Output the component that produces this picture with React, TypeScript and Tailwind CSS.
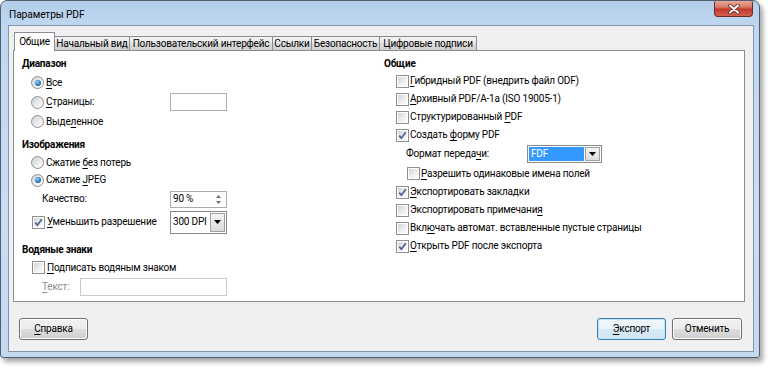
import React from "react";

const U = ({ children }: { children: React.ReactNode }) => (
  <span className="underline decoration-1 underline-offset-[2px]">{children}</span>
);

const Radio = ({ checked, className = "" }: { checked?: boolean; className?: string }) => (
  <span
    className={
      "w-[13px] h-[13px] shrink-0 rounded-full border border-[#8e8f8f] bg-[linear-gradient(135deg,#d0d0d0,#efefef_60%,#ffffff)] flex items-center justify-center " +
      className
    }
  >
    {checked && (
      <span className="w-[6px] h-[6px] rounded-full bg-[radial-gradient(circle_at_40%_35%,#9fd6ff_0%,#2f7fcc_50%,#173f77_100%)]" />
    )}
  </span>
);

const Check = ({ checked, className = "" }: { checked?: boolean; className?: string }) => (
  <span className={"w-[13px] h-[13px] shrink-0 border border-[#8e8f8f] bg-white p-[1px] flex " + className}>
    <span className="flex-1 bg-[linear-gradient(135deg,#d2d2d2,#eeeeee_55%,#fbfbfb)] flex items-center justify-center">
      {checked && (
        <svg viewBox="0 0 9 9" className="w-[9px] h-[9px]">
          <path d="M1.3 4.6 L3.4 7.2 L7.8 1.2" stroke="#4c619c" strokeWidth="1.7" fill="none" />
        </svg>
      )}
    </span>
  </span>
);

const Arrow = () => (
  <svg viewBox="0 0 7 4" className="w-[7px] h-[4px]">
    <path d="M0 0 H7 L3.5 4 Z" fill="#000" />
  </svg>
);

const Tab = ({ label, w, selected }: { label: string; w: number; selected?: boolean }) => (
  <div
    style={{ width: w }}
    className={
      selected
        ? "relative z-10 h-[19px] bg-white border border-b-0 border-[#898c95] flex items-center justify-center pb-[1px]"
        : "h-[14px] mb-[1px] -ml-[1px] bg-[linear-gradient(#f3f3f3,#ebebeb_50%,#dddddd_50%,#cfcfcf)] border border-b-0 border-[#898c95] flex items-center justify-center"
    }
  >
    {label}
  </div>
);

const Btn = ({ children, w, def }: { children: React.ReactNode; w: number; def?: boolean }) => (
  <div
    style={{ width: w }}
    className={
      def
        ? "h-[22px] rounded-[3px] border border-[#3c7fb1] bg-[linear-gradient(#f2f8fc,#e8f2fa_50%,#d9eaf6_50%,#cfe4f3)] shadow-[inset_0_0_0_1px_#bfe4fb] flex items-center justify-center"
        : "h-[22px] rounded-[3px] border border-[#707070] bg-[linear-gradient(#f2f2f2,#ebebeb_50%,#dddddd_50%,#cfcfcf)] shadow-[inset_0_0_0_1px_#fcfcfc] flex items-center justify-center"
    }
  >
    {children}
  </div>
);

export default function App() {
  return (
    <div className="w-[768px] h-[367px] bg-white font-['Roboto','Noto_Sans',sans-serif] text-[10px] tracking-[-0.2px] text-black leading-none whitespace-nowrap">
      <div className="w-[760px] h-[358px] rounded-t-[7px] rounded-b-[3px] border border-[#4f5d6d] bg-[linear-gradient(to_bottom,#b3cdea,#bfd7f1_24px,#c9ddf3_60%,#c4d9f0)] shadow-[3px_4px_5px_rgba(0,0,0,0.35)] flex flex-col">
        <div className="h-[24px] flex items-start justify-between">
          <div className="pl-[8px] pt-[9px] text-[10.2px] tracking-[-0.1px] text-black">Параметры PDF</div>
          <div className="mr-[6px] w-[39px] h-[16px] rounded-b-[4px] rounded-t-[2px] border border-t-0 border-[#6e2b23] bg-[linear-gradient(#e9a89a,#d97a68_40%,#c0392b_55%,#d0614f)] flex items-center justify-center">
            <svg viewBox="0 0 12 10" className="w-[12px] h-[10px]">
              <path d="M2 1.5 L10 8.5 M10 1.5 L2 8.5" stroke="#5a2a24" strokeWidth="3.6" strokeLinecap="round" />
              <path d="M2 1.5 L10 8.5 M10 1.5 L2 8.5" stroke="#ffffff" strokeWidth="2" strokeLinecap="round" />
            </svg>
          </div>
        </div>
        <div className="ml-[7px] mr-[5px] mb-[5px] flex-1 bg-[#f0f0f0] border border-[#8396ab] flex flex-col">
          <div className="pt-[6px] pl-[5px] flex items-end">
            <Tab label="Общие" w={41} selected />
            <Tab label="Начальный вид" w={76} />
            <Tab label="Пользовательский интерфейс" w={144} />
            <Tab label="Ссылки" w={40} />
            <Tab label="Безопасность" w={69} />
            <Tab label="Цифровые подписи" w={98} />
          </div>
          <div className="-mt-[1px] ml-[4px] w-[732px] h-[252px] bg-white border border-[#898c95] flex pl-[8px] pt-[4px]">
            {/* Left column */}
            <div className="w-[362px] flex flex-col">
              <div className="h-[18px] flex items-center font-bold">Диапазон</div>
              <div className="h-[19px] flex items-center">
                <Radio checked className="ml-[9px]" />
                <span className="ml-[2px]">
                  <U>В</U>се
                </span>
              </div>
              <div className="h-[20px] flex items-center">
                <div className="w-[148px] flex items-center">
                  <Radio className="ml-[9px]" />
                  <span className="ml-[2px]">
                    <U>С</U>траницы:
                  </span>
                </div>
                <div className="w-[57px] h-[18px] border border-[#abadb3] bg-white" />
              </div>
              <div className="h-[19px] flex items-center">
                <Radio className="ml-[9px]" />
                <span className="ml-[2px]">
                  Выде<U>л</U>енное
                </span>
              </div>
              <div className="mt-[5px] h-[18px] flex items-center font-bold">Изображения</div>
              <div className="h-[17px] flex items-center">
                <Radio className="ml-[9px]" />
                <span className="ml-[2px]">
                  Сжатие <U>б</U>ез потерь
                </span>
              </div>
              <div className="h-[18px] flex items-center">
                <Radio checked className="ml-[9px]" />
                <span className="ml-[2px]">
                  Сжатие <U>J</U>PEG
                </span>
              </div>
              <div className="h-[20px] flex items-center">
                <div className="w-[148px] pl-[20px]">Качество:</div>
                <div className="w-[57px] h-[17px] border border-[#abadb3] bg-white flex items-center">
                  <span className="flex-1 pl-[2px]">90 %</span>
                  <div className="w-[13px] h-full flex flex-col items-center justify-center gap-[3px] mr-[1px]">
                    <svg viewBox="0 0 5 3" className="w-[5px] h-[3px]">
                      <path d="M0 3 H5 L2.5 0 Z" fill="#6f6f6f" />
                    </svg>
                    <svg viewBox="0 0 5 3" className="w-[5px] h-[3px]">
                      <path d="M0 0 H5 L2.5 3 Z" fill="#6f6f6f" />
                    </svg>
                  </div>
                </div>
              </div>
              <div className="mt-[1px] h-[24px] flex items-center">
                <div className="w-[148px] flex items-center">
                  <Check checked className="ml-[10px]" />
                  <span className="ml-[2px]">
                    <U>У</U>меньшить разрешение
                  </span>
                </div>
                <div className="w-[57px] h-[23px] border border-[#8a8a8a] bg-white flex items-stretch">
                  <span className="flex-1 flex items-center pl-[2px]">300 DPI</span>
                  <div className="w-[15px] m-[1px] border border-[#a0a0a0] bg-[linear-gradient(#f4f4f4,#dcdcdc)] flex items-center justify-center">
                    <Arrow />
                  </div>
                </div>
              </div>
              <div className="mt-[7px] h-[18px] flex items-center font-bold">Водяные знаки</div>
              <div className="h-[17px] flex items-center">
                <Check className="ml-[10px]" />
                <span className="ml-[2px]">
                  <U>П</U>одписать водяным знаком
                </span>
              </div>
              <div className="mt-[1px] h-[20px] flex items-center">
                <div className="w-[58px] pl-[20px] text-[#8d8d8d]">
                  <U>Т</U>екст:
                </div>
                <div className="w-[147px] h-[18px] border border-[#c9cbd0] bg-white" />
              </div>
            </div>
            {/* Right column */}
            <div className="flex flex-col">
              <div className="h-[17px] flex items-center font-bold">Общие</div>
              <div className="h-[18px] flex items-center">
                <Check className="ml-[12px]" />
                <span className="ml-[1px]">
                  <U>Г</U>ибридный PDF (внедрить файл ODF)
                </span>
              </div>
              <div className="h-[18px] flex items-center">
                <Check className="ml-[12px]" />
                <span className="ml-[1px]">
                  <U>А</U>рхивный PDF/A-1a (ISO 19005-1)
                </span>
              </div>
              <div className="h-[18px] flex items-center">
                <Check className="ml-[12px]" />
                <span className="ml-[1px]">
                  Структурированный <U>P</U>DF
                </span>
              </div>
              <div className="h-[18px] flex items-center">
                <Check checked className="ml-[12px]" />
                <span className="ml-[1px]">
                  Создать <U>ф</U>орму PDF
                </span>
              </div>
              <div className="h-[20px] flex items-center">
                <div className="w-[143px] pl-[22px]">
                  Формат переда<U>ч</U>и:
                </div>
                <div className="w-[75px] h-[18px] border border-[#8a8a8a] bg-white flex items-stretch p-[1px]">
                  <span className="flex-1 bg-[#3399ff] text-white flex items-center pl-[2px]">FDF</span>
                  <div className="w-[15px] ml-[1px] border border-[#a0a0a0] bg-[linear-gradient(#f4f4f4,#dcdcdc)] flex items-center justify-center">
                    <Arrow />
                  </div>
                </div>
              </div>
              <div className="h-[19px] flex items-center">
                <Check className="ml-[23px]" />
                <span className="ml-[1px]">
                  <U>Р</U>азрешить одинаковые имена полей
                </span>
              </div>
              <div className="h-[18px] flex items-center">
                <Check checked className="ml-[12px]" />
                <span className="ml-[1px]">
                  <U>Э</U>кспортировать закладки
                </span>
              </div>
              <div className="h-[18px] flex items-center">
                <Check className="ml-[12px]" />
                <span className="ml-[1px]">
                  Экспортировать примечани<U>я</U>
                </span>
              </div>
              <div className="h-[18px] flex items-center">
                <Check className="ml-[12px]" />
                <span className="ml-[1px]">
                  Вкл<U>ю</U>чать автомат. вставленные пустые страницы
                </span>
              </div>
              <div className="h-[18px] flex items-center">
                <Check checked className="ml-[12px]" />
                <span className="ml-[1px]">
                  <U>О</U>ткрыть PDF после экспорта
                </span>
              </div>
            </div>
          </div>
          <div className="mt-[16px] flex items-center pl-[10px] pr-[11px]">
            <Btn w={69}>
              <span>
                <U>С</U>правка
              </span>
            </Btn>
            <div className="flex-1" />
            <Btn w={69} def>
              <span>
                <U>Э</U>кспорт
              </span>
            </Btn>
            <div className="w-[6px]" />
            <Btn w={70}>Отменить</Btn>
          </div>
        </div>
      </div>
    </div>
  );
}
